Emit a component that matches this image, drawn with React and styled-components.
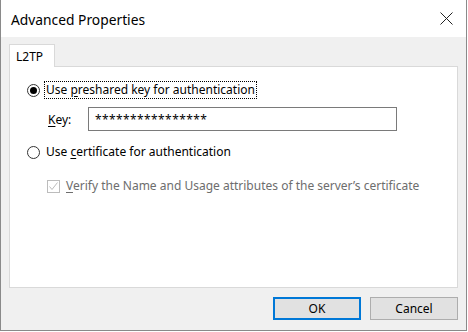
import React from "react";
import styled, { createGlobalStyle } from "styled-components";

const Global = createGlobalStyle`
  html, body { margin: 0; padding: 0; background: #ffffff; }
  body { font-family: "Noto Sans", "Liberation Sans", sans-serif; }
  * { box-sizing: border-box; }
`;

const Window = styled.div`
  width: 467px;
  height: 331px;
  border: 1px solid #8a8a8a;
  border-top: none;
  display: flex;
  flex-direction: column;
  background: #f0f0f0;
  color: #000;
`;

const TitleBar = styled.div`
  height: 37px;
  background: #fff;
  display: flex;
  align-items: center;
  justify-content: space-between;
  padding: 0 13px 0 10px;
`;

const Title = styled.span`
  font-size: 13.8px;
  color: #000;
  padding-top: 2px;
`;

const Close = styled.svg`
  width: 13px;
  height: 13px;
  margin-top: -1px;
`;

const Body = styled.div`
  flex: 1;
  display: flex;
  flex-direction: column;
  padding: 7px 8px 10px 8px;
`;

const TabStrip = styled.div`
  display: flex;
  position: relative;
  z-index: 1;
  margin-bottom: -1px;
`;

const Tab = styled.div`
  width: 46px;
  height: 23px;
  background: #fff;
  border: 1px solid #d9d9d9;
  border-bottom: none;
  font-size: 12px;
  padding: 3px 0 0 6px;
`;

const Panel = styled.div`
  height: 222px;
  background: #fff;
  border: 1px solid #d9d9d9;
  padding: 14px 0 0 17px;
  display: flex;
  flex-direction: column;
  font-size: 12px;
`;

const OptionRow = styled.label`
  display: flex;
  align-items: center;
  height: 18px;
  margin-top: ${(p) => p.$mt || 0}px;
  margin-left: ${(p) => p.$ml || 0}px;
  color: ${(p) => (p.$disabled ? "#6d6d6d" : "#000")};
`;

const Radio = styled.span`
  width: 13px;
  height: 13px;
  border-radius: 50%;
  border: 1px solid #333;
  display: flex;
  align-items: center;
  justify-content: center;
  flex: none;
  &::after {
    content: "";
    width: 7px;
    height: 7px;
    border-radius: 50%;
    background: ${(p) => (p.$checked ? "#000" : "transparent")};
  }
`;

const Check = styled.span`
  width: 13px;
  height: 13px;
  border: 1px solid #bcbcbc;
  background: #fff;
  flex: none;
  display: flex;
  align-items: center;
  justify-content: center;
`;

const LabelText = styled.span`
  margin-left: ${(p) => p.$gap || 4}px;
  padding: 1px 1px;
  line-height: 14px;
  border: 1px ${(p) => (p.$focus ? "dotted #000" : "solid transparent")};
  white-space: nowrap;
`;

const U = styled.u`
  text-underline-offset: 2px;
`;

const KeyRow = styled.div`
  display: flex;
  align-items: center;
  margin-top: 8px;
  margin-left: 21px;
`;

const KeyLabel = styled.span`
  width: 40px;
`;

const Input = styled.div`
  width: 309px;
  height: 24px;
  border: 1px solid #7a7a7a;
  padding: 3px 0 0 6px;
  font-size: 12px;
  letter-spacing: 0.4px;
`;

const Footer = styled.div`
  display: flex;
  justify-content: flex-end;
  gap: 9px;
  margin-top: 9px;
`;

const Button = styled.button`
  width: 88px;
  height: 23px;
  font-family: inherit;
  font-size: 12px;
  color: #000;
  background: #e1e1e1;
  border: ${(p) => (p.$default ? "2px solid #0078d7" : "1px solid #adadad")};
  padding: 0;
`;

export default function App() {
  return (
    <>
      <Global />
      <Window>
        <TitleBar>
          <Title>Advanced Properties</Title>
          <Close viewBox="0 0 13 13">
            <path d="M0.5 0.5 L12.5 12.5 M12.5 0.5 L0.5 12.5" stroke="#222" strokeWidth="1" fill="none" />
          </Close>
        </TitleBar>
        <Body>
          <TabStrip>
            <Tab>L2TP</Tab>
          </TabStrip>
          <Panel>
            <OptionRow>
              <Radio $checked />
              <LabelText $focus>
                Use <U>p</U>reshared key for authentication
              </LabelText>
            </OptionRow>
            <KeyRow>
              <KeyLabel>
                <U>K</U>ey:
              </KeyLabel>
              <Input>****************</Input>
            </KeyRow>
            <OptionRow $mt={12}>
              <Radio />
              <LabelText>
                Use <U>c</U>ertificate for authentication
              </LabelText>
            </OptionRow>
            <OptionRow $mt={16} $ml={20} $disabled>
              <Check>
                <svg width="11" height="11" viewBox="0 0 11 11">
                  <path d="M1.5 5.5 L4 8.5 L9.5 1.5" stroke="#bcbcbc" strokeWidth="1" fill="none" />
                </svg>
              </Check>
              <LabelText>
                <U>V</U>erify the Name and Usage attributes of the server’s certificate
              </LabelText>
            </OptionRow>
          </Panel>
          <Footer>
            <Button $default>OK</Button>
            <Button>Cancel</Button>
          </Footer>
        </Body>
      </Window>
    </>
  );
}
